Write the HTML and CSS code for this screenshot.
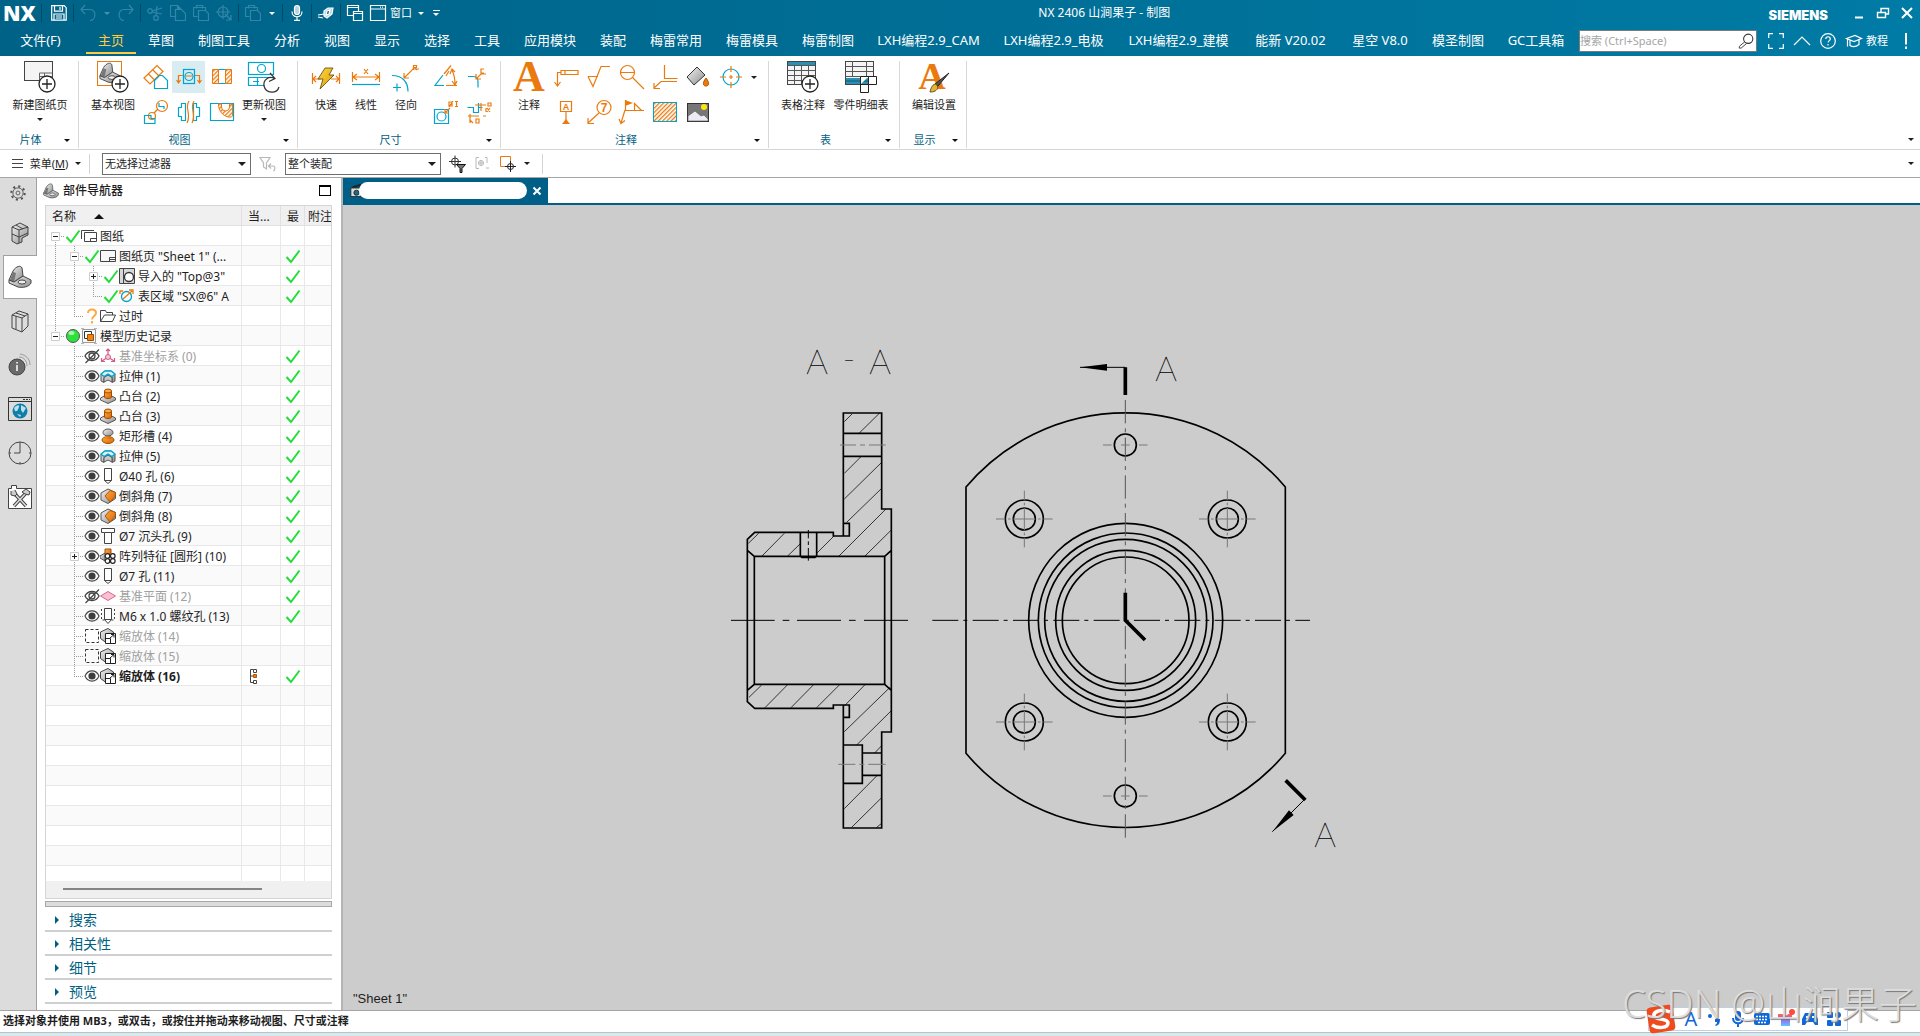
FILE: index.html
```html
<!DOCTYPE html>
<html lang="zh-CN">
<head>
<meta charset="utf-8">
<title>NX 2406 山涧果子 - 制图</title>
<link rel="stylesheet" href="styles.css">
</head>
<body>
<svg class="defs" aria-hidden="true">
  <defs>
    <linearGradient id="metal" x1="0" y1="0" x2="1" y2="1"><stop offset="0" stop-color="#f4f4f4"/><stop offset="1" stop-color="#8c8c8c"/></linearGradient>
    <linearGradient id="amber" x1="0" y1="0" x2="1" y2="1"><stop offset="0" stop-color="#ffab45"/><stop offset="1" stop-color="#d86400"/></linearGradient>
    <linearGradient id="bolt" x1="0" y1="0" x2="1" y2="1"><stop offset="0" stop-color="#ffd84a"/><stop offset="1" stop-color="#d99b00"/></linearGradient>
    <linearGradient id="shirt" x1="0" y1="0" x2="0" y2="1"><stop offset="0" stop-color="#ff6a3c"/><stop offset=".4" stop-color="#a35cf0"/><stop offset="1" stop-color="#5ac8ff"/></linearGradient>
    <pattern id="stripes" width="3" height="3" patternUnits="userSpaceOnUse" patternTransform="rotate(45)"><rect width="3" height="3" fill="#fff"/><rect width="1.300" height="3" fill="#eb7a0e"/></pattern>
    <symbol id="check" viewBox="0 0 16 16"><path d="M1.500 9l4.500 5L14.500 2.500" fill="none" stroke="#24dd3a" stroke-width="2"/></symbol>
    <symbol id="question" viewBox="0 0 16 16"><path d="M4 5c0-5 8-4.500 8 0 0 3-4 3-4 6.500M8 13v2.500" fill="none" stroke="#ffa940" stroke-width="2"/></symbol>
    <symbol id="ball" viewBox="0 0 16 16"><circle cx="8" cy="8" r="6.500" fill="#2ee03c" stroke="#555"/><ellipse cx="6.500" cy="5" rx="3" ry="2" fill="#a6f7ab"/></symbol>
    <symbol id="eye" viewBox="0 0 16 16"><path d="M1 8C4 1.200 12 1.200 15 8 12 14.800 4 14.800 1 8z" fill="#fff" stroke="#444" stroke-width="1.100"/><circle cx="8" cy="8" r="3.600" fill="#3d3d3d"/></symbol>
    <symbol id="eye-off" viewBox="0 0 16 16"><path d="M1 8C4 2 12 2 15 8 12 14 4 14 1 8z" fill="none" stroke="#444" stroke-width="1.300"/><circle cx="8" cy="8" r="3" fill="none" stroke="#444" stroke-width="1.300"/><path d="M1.500 15L15 1.500" stroke="#444" stroke-width="1.300"/></symbol>
    <symbol id="dashed" viewBox="0 0 16 16"><rect x="1.500" y="1.500" width="13" height="13" fill="none" stroke="#333" stroke-dasharray="3 2"/></symbol>
    <symbol id="sheets" viewBox="0 0 16 16"><path d="M.5 11V2.500H13M3.500 13.500v-9h12v9z" fill="#fff" stroke="#444"/><path d="M9.500 13.500v-3h6" fill="none" stroke="#444"/></symbol>
    <symbol id="sheet" viewBox="0 0 16 16"><path d="M.5 2.500h15v11H.5z" fill="#f7f7f7" stroke="#444"/><path d="M9.500 13.500v-4h6M9.500 11.500h6" fill="none" stroke="#444"/></symbol>
    <symbol id="imported" viewBox="0 0 16 16"><path d="M.5.500h15v15H.5z" fill="#d8d8d8" stroke="#444"/><path d="M4.500 1v14" stroke="#444"/><circle cx="10" cy="9" r="4.500" fill="#fff" stroke="#333" stroke-width="1.300"/></symbol>
    <symbol id="region" viewBox="0 0 16 16"><circle cx="7.500" cy="8.500" r="5" fill="none" stroke="#00a5cf" stroke-width="1.300"/><path d="M1 6V3h3M4 11L13 3M10 2l4 0v4" fill="none" stroke="#eb7a0e" stroke-width="1.300"/></symbol>
    <symbol id="folder" viewBox="0 0 16 16"><path d="M.5 13.500v-11h5l1 2h6v2.500M.5 13.500L4.500 7h11l-3 6.500z" fill="#fff" stroke="#444"/></symbol>
    <symbol id="history" viewBox="0 0 16 16"><path d="M1.500 1.500h13v13h-13z" fill="none" stroke="#999"/><path d="M0 0h3M13 0h3M0 16h3M13 16h3" stroke="#777"/><path d="M3.500 3.500h7v7h-7z" fill="#fff" stroke="#333"/><path d="M6.500 6.500h6v6h-6z" fill="#f08216" stroke="#a14b00"/></symbol>
    <symbol id="csys" viewBox="0 0 16 16"><path d="M8 9V1M8 9L2 13M8 9l6 4M6 3l2-2 2 2M1.500 10v3.500H5M14.500 10v3.500H11" fill="none" stroke="#d35b85" stroke-width="1.200"/><circle cx="8" cy="9" r="2.500" fill="#f7c6d6" stroke="#d35b85"/></symbol>
    <symbol id="extrude" viewBox="0 0 16 16"><path d="M1 6l4-3h6l4 3v7l-3 1.500V9L8 7 4 9.500v5L1 13z" fill="url(#metal)" stroke="#555"/><path d="M4 9.500l4-2.500 4 2.500v4.500l-4-2-4 2z" fill="#c9c9c9" stroke="#555"/><path d="M1 6l4-3h6l4 3-3 2.500L8 6 4 8.500z" fill="#d6f3fa" stroke="#00a5cf" stroke-width="1.300"/></symbol>
    <symbol id="boss" viewBox="0 0 16 16"><path d="M.5 10L8 6l7.500 4v2L8 15.500.5 12z" fill="url(#metal)" stroke="#555"/><path d="M4.500 3v6c0 2 7 2 7 0V3z" fill="url(#amber)" stroke="#a14b00"/><ellipse cx="8" cy="3" rx="3.500" ry="2" fill="#ffab45" stroke="#a14b00"/></symbol>
    <symbol id="groove" viewBox="0 0 16 16"><ellipse cx="8" cy="12" rx="6" ry="3.500" fill="url(#amber)" stroke="#a14b00"/><path d="M5 6h6v5H5z" fill="url(#amber)"/><ellipse cx="8" cy="4.500" rx="5" ry="3.500" fill="url(#metal)" stroke="#555"/></symbol>
    <symbol id="hole" viewBox="0 0 16 16"><path d="M4.500.5h7v12L8 15.500 4.500 12.500zM4.500 12.500h7" fill="#fff" stroke="#444"/></symbol>
    <symbol id="cbore" viewBox="0 0 16 16"><path d="M1.500.500h13v4h-3v11h-7v-11h-3zM4.500 4.500h7" fill="#fff" stroke="#444"/></symbol>
    <symbol id="thread" viewBox="0 0 16 16"><path d="M4.500.5h7v11L8 15.500 4.500 11.500zM4.500 11.500h7" fill="#fff" stroke="#444"/><path d="M1.500 1v11h3M14.500 1v11h-3" fill="none" stroke="#444" stroke-dasharray="2 2"/></symbol>
    <symbol id="chamfer" viewBox="0 0 16 16"><path d="M1 5l7-4 7.500 3.500v6L8 15.500 1 12z" fill="url(#metal)" stroke="#555"/><path d="M5 8l5-5.500 5.500 2-.5 4L10 14z" fill="url(#amber)" stroke="#b45400"/></symbol>
    <symbol id="pattern" viewBox="0 0 16 16"><path d="M5 1h6v7H5z" fill="url(#amber)" stroke="#a14b00"/><path d="M0 8l5-3v8l-5-3z" fill="url(#metal)" stroke="#555"/><g fill="#fff" stroke="#222" stroke-width="1.200"><circle cx="7.500" cy="8" r="2.300"/><circle cx="12.800" cy="8" r="2.300"/><circle cx="7.500" cy="13" r="2.300"/><circle cx="12.800" cy="13" r="2.300"/></g></symbol>
    <symbol id="plane" viewBox="0 0 16 16"><path d="M.5 8L8 3.500 15.500 8 8 12.500z" fill="#f7c0d3" stroke="#d9668e"/></symbol>
    <symbol id="scale" viewBox="0 0 16 16"><path d="M.5 4L8 .5 13.500 4v6L6 14.500.5 10.500z" fill="url(#metal)" stroke="#444"/><path d="M5.500 5.500h10v10h-10z" fill="#fff" stroke="#222"/><path d="M5.500 10.500h5v5M10 10l4-3.500M11 6.500h3v3" fill="none" stroke="#222"/></symbol>
    <symbol id="current" viewBox="0 0 16 16"><path d="M5.500 1.500h-3v13h3M2.500 8h3" fill="none" stroke="#444"/><path d="M5.500 1.500h3v3h-3zM5.500 12.500h3v3h-3z" fill="#fff" stroke="#444"/><path d="M5.500 6.500h3v3h-3z" fill="#eb7a0e" stroke="#b45400"/></symbol>
    <symbol id="minus" viewBox="0 0 9 9"><path d="M.5.5h8v8h-8z" fill="#fff" stroke="#ccc"/><path d="M2 4.500h5" stroke="#222"/></symbol>
    <symbol id="plus" viewBox="0 0 9 9"><path d="M.5.5h8v8h-8z" fill="#fff" stroke="#ccc"/><path d="M2 4.500h5M4.500 2v5" stroke="#222"/></symbol>
    <symbol id="bracket" viewBox="0 0 24 24"><path d="M1 15L5 6C8 1 13 0 14 3l1 8-9 6z" fill="url(#metal)" stroke="#444"/><path d="M5 7l-3 8 4 2 2-9" fill="#777"/><path d="M1 15l5 2 9-6 8 4v3c-2 4-8 5-13 4l-9-4z" fill="url(#metal)" stroke="#444"/><ellipse cx="14" cy="17" rx="4" ry="2" fill="#eee" stroke="#444"/></symbol>
    <symbol id="add" viewBox="0 0 18 18"><circle cx="9" cy="9" r="8" fill="#fff" stroke="#222" stroke-width="1.300"/><path d="M9 4v10M4 9h10" stroke="#222" stroke-width="1.300"/></symbol>
    <symbol id="copy" viewBox="0 0 16 16"><path d="M10.500 11.500h-10V.5h7l3 3zM7.500.5v3h3" /><path d="M5.500 4.500h6l4 4v7h-10z" fill="#006489"/></symbol>
    <symbol id="paste" viewBox="0 0 16 16"><path d="M4.500 11.500h-4v-9h12v3M3.500 3.500v-3h6v3" /><path d="M5.500 5.500h7l3 3v7h-10z" fill="#006489"/></symbol>
  </defs>
</svg>

<header class="masthead">
  <div class="titlebar">
    <div class="quick">
      <span class="logo">NX</span><i class="rule"></i>
      <button class="qb" aria-label="保存"><svg viewBox="0 0 16 16"><path d="M.7.700h12.500l2 2v12.500H.7zM3.500.7v5.500h8V.7M9 2v3M3 15V9h10v6M5 11h6M5 13h6"/></svg></button><i class="rule"></i>
      <button class="qb dim" aria-label="撤消"><svg viewBox="0 0 16 16"><path d="M5 0L1 4.500 5 9M1 4.500h9c7 0 6 11 0 11"/></svg></button><span class="drop dim"><i class="caret"></i></span>
      <button class="qb dim" aria-label="重做"><svg viewBox="0 0 16 16"><path d="M11 0l4 4.500L11 9M15 4.500H6c-7 0-6 11 0 11"/></svg></button><i class="rule"></i>
      <button class="qb dim" aria-label="剪切"><svg viewBox="0 0 16 16"><circle cx="3" cy="6" r="2.300"/><circle cx="9" cy="13" r="2.300"/><path d="M5 7l10 2M9 10.500L10 1M5 6l10-3"/></svg></button>
      <button class="qb dim" aria-label="复制"><svg viewBox="0 0 16 16"><use href="#copy"/></svg></button>
      <button class="qb dim" aria-label="粘贴"><svg viewBox="0 0 16 16"><use href="#paste"/></svg></button>
      <button class="qb dim" aria-label="定位"><svg viewBox="0 0 16 16"><circle cx="7" cy="7" r="5"/><path d="M7 0v14M0 7h14M9 9l6 6M15 10v5h-5"/></svg></button><i class="rule"></i>
      <button class="qb dim" aria-label="选择性粘贴"><svg viewBox="0 0 16 16"><use href="#paste"/></svg></button><span class="drop"><i class="caret"></i></span><i class="rule"></i>
      <button class="qb" aria-label="语音"><svg viewBox="0 0 16 16"><rect x="5.500" y=".5" width="5" height="9" rx="2.500" fill="#b9d3dd"/><path d="M3 6.500c0 7 10 7 10 0M8 12v3M5 15.300h6"/></svg></button><i class="rule"></i>
      <button class="qb" aria-label="触控"><svg viewBox="0 0 16 16"><path d="M0 10l6-1 2-3M0 12l5 1" /><path d="M6 6l4-3 5 0-1 6-5 4-3-2z" fill="#b9d3dd"/><path d="M9 6l3-1-1 4-3 1z" fill="#006489"/></svg></button><i class="rule"></i>
      <button class="qb" aria-label="层叠"><svg viewBox="0 0 16 16"><path d="M6 10.500H.500V.5h11V6M.5 2.500h11M6.500 6.500h9v9h-9zM6.500 8.500h9"/></svg></button>
      <button class="qb" aria-label="新窗口"><svg viewBox="0 0 16 16"><path d="M.5.5h15v15H.5zM.5 4h15M10 2.200h1M12 2.200h1"/></svg></button>
      <button class="window-menu">窗口<i class="caret"></i></button>
      <button class="more" aria-label="更多"><i></i><i class="caret"></i></button>
    </div>
    <h1 class="caption">NX 2406 山涧果子 - 制图</h1>
    <div class="win">
      <span class="brand">SIEMENS</span>
      <button class="wb" aria-label="最小化"><svg viewBox="0 0 12 12"><path d="M2 10.500h8"/></svg></button>
      <button class="wb" aria-label="还原"><svg viewBox="0 0 12 12"><path d="M4 5V1.500h7.500V7H9M.5 5.500h8v5h-8z" stroke-width="1.400"/></svg></button>
      <button class="wb" aria-label="关闭"><svg viewBox="0 0 12 12"><path d="M1 1l10 10M11 1L1 11"/></svg></button>
    </div>
  </div>
  <nav class="tabs">
    <a class="tab tab--file" href="#">文件(F)</a>
    <a class="tab tab--on" href="#">主页</a>
    <a class="tab" href="#">草图</a>
    <a class="tab tab--m" href="#">制图工具</a>
    <a class="tab" href="#">分析</a>
    <a class="tab" href="#">视图</a>
    <a class="tab" href="#">显示</a>
    <a class="tab" href="#">选择</a>
    <a class="tab" href="#">工具</a>
    <a class="tab tab--m" href="#">应用模块</a>
    <a class="tab" href="#">装配</a>
    <a class="tab tab--m" href="#">梅雷常用</a>
    <a class="tab tab--m" href="#">梅雷模具</a>
    <a class="tab tab--m" href="#">梅雷制图</a>
    <a class="tab tab--xl" href="#">LXH编程2.9_CAM</a>
    <a class="tab tab--xl" href="#">LXH编程2.9_电极</a>
    <a class="tab tab--xl" href="#">LXH编程2.9_建模</a>
    <a class="tab tab--l" href="#">能新 V20.02</a>
    <a class="tab tab--s" href="#">星空 V8.0</a>
    <a class="tab tab--m" href="#">模圣制图</a>
    <a class="tab tab--s" href="#">GC工具箱</a>
    <div class="tools">
      <label class="search"><input type="text" placeholder="搜索 (Ctrl+Space)" aria-label="搜索"><svg viewBox="0 0 18 18"><circle cx="11.500" cy="6.500" r="5.200" fill="#fff" stroke="#333" stroke-width="1.200"/><path d="M7.500 10l2 2-6 5H1.500v-2z" fill="#fff" stroke="#333"/></svg></label>
      <button class="qb" aria-label="全屏"><svg viewBox="0 0 16 16"><path d="M.7 5V.7H5M11 .7h4.300V5M15.300 11v4.300H11M5 15.300H.7V11"/></svg></button>
      <button class="qb" aria-label="折叠功能区"><svg viewBox="0 0 16 16"><path d="M0 12l8-8 8 8"/></svg></button>
      <button class="qb" aria-label="帮助"><svg viewBox="0 0 16 16"><circle cx="8" cy="8" r="7.300"/><path d="M5.800 6c0-3 4.500-3 4.500 0 0 1.500-2.200 1.800-2.200 3.500M8 11v1.500"/></svg></button>
      <button class="learn"><svg viewBox="0 0 16 16"><path d="M.5 5.500L9 2.500l6.500 3L8 8.500zM4 7.500v5c3 2 6 1.500 9-1V7M1.500 6.500v7"/></svg>教程</button>
      <button class="qb" aria-label="通知"><svg viewBox="0 0 16 16"><path d="M8 0v11.500M8 13.500V16" stroke-width="2"/></svg></button>
    </div>
  </nav>
</header>

<section class="ribbon" aria-label="功能区">
  <div class="group g-sheet">
    <div class="cmds">
      <button class="big wide"><svg viewBox="0 0 32 32"><rect x=".5" y=".5" width="28" height="19" fill="#f4f4f4" stroke="#444"/><path d="M15.500 19v-7h13M15.500 15.500h13M20.500 12v7" fill="none" stroke="#666"/><use href="#add" x="14" y="14" width="18" height="18"/></svg>新建图纸页<i class="caret"></i></button>
    </div>
    <div class="foot"><span>片体</span><i class="caret"></i></div>
  </div>
  <div class="group g-view">
    <div class="cmds">
      <button class="big"><svg viewBox="0 0 32 32"><rect x=".5" y=".5" width="24" height="24" fill="#fff" stroke="#eb7a0e"/><use href="#bracket" x="2" y="1" width="22" height="22"/><use href="#add" x="14" y="14" width="18" height="18"/></svg>基本视图</button>
      <div class="smalls c3">
        <button class="sm" aria-label="投影视图"><svg viewBox="0 0 24 24"><path d="M0 13L13 .5l6 6L6 19zM4.500 9l6 6M9 5l6 6" class="o"/><path d="M10.500 23.500v-8l5-5h3l5 5v8z" class="c f"/></svg></button>
        <button class="sm lit" aria-label="剖视图"><svg viewBox="0 0 24 24"><rect x="6.500" y="4.500" width="11" height="14" class="c"/><circle cx="12" cy="11.500" r="4" class="c"/><path d="M6 10.500H1.500V18M18 10.500h4.500V18M-.5 15l2 3 2-3M20.500 15l2 3 2-3M9 11h6" class="o"/></svg></button>
        <button class="sm" aria-label="断面图"><svg viewBox="0 0 24 24"><path d="M2.500 4.500h6v14h-6zM15.500 4.500h6v14h-6z" fill="url(#stripes)" stroke="#eb7a0e"/><path d="M8.500 4.500h7M8.500 18.500h7" class="c"/></svg></button>
        <button class="sm" aria-label="局部放大图"><svg viewBox="0 0 24 24"><circle cx="18" cy="6" r="5.500" class="o"/><circle cx="8" cy="16" r="3.500" class="o"/><path d="M10 13l4-4" class="o"/><path d="M15 3v3.500h5V9M.5 15.500H7v3h4v5H.5z" class="c"/></svg></button>
        <button class="sm" aria-label="断开视图"><svg viewBox="0 0 24 24"><path d="M1.500 7.500h3v-4h4v17h-4v-4h-3zM22.500 7.500h-3v-4h-3v17h3v-4h3z" class="c"/><path d="M12 1c-5 8 3 12-2 22M17 1c-5 8 3 12-2 22" class="o"/></svg></button>
        <button class="sm" aria-label="局部剖"><svg viewBox="0 0 24 24"><path d="M.5 3.500h23v17H.5z" class="c"/><path d="M8.500 4c0 6 3 10 7 12s6 1 7 0V4h-3v3a4 4 0 0 1-8 0V4z" fill="url(#stripes)" stroke="#eb7a0e"/></svg></button>
      </div>
      <button class="big"><svg viewBox="0 0 32 32"><rect x=".5" y="1.500" width="25" height="12" class="c"/><circle cx="13.500" cy="7.500" r="4" class="c"/><path d="M25.500 16.500H.5v8h16M5 20.500h6M9.500 17v7" class="c"/><path d="M27 18c-6-4-12 1-11 7 2 8 13 8 15 1M22 12l5 5.500-6 3" fill="none" stroke="#333" stroke-width="1.200"/></svg>更新视图<i class="caret"></i></button>
    </div>
    <div class="foot"><span>视图</span><i class="caret"></i></div>
  </div>
  <div class="group g-dim">
    <div class="cmds">
      <button class="big"><svg viewBox="0 0 32 32"><path d="M2.500 12v11M29.500 12v11M3 18h8M21 18h8M6 15l-3 3 3 3M26 15l3 3-3 3" class="o"/><path d="M15 7h8l-4 7h5L10 28l3-10H8z" fill="url(#bolt)" stroke="#5a4500" stroke-width=".8"/></svg>快速</button>
      <button class="big"><svg viewBox="0 0 32 32"><path d="M2.500 11v10M29.500 11v10M3 16h26M7 13l-4 3 4 3M25 13l4 3-4 3M14 8l4 5M18 8l-4 5" class="o"/><path d="M2 23.500h28" class="c"/></svg>线性</button>
      <button class="big"><svg viewBox="0 0 32 32"><path d="M2 14.500c10 0 16 6 16 16M3 26.500h8M7 22.500v8" class="c"/><path d="M14 17l9-9h6M14 12v5h5M23.500 9V4.500h3v2h-3M25 7l2 2" class="o"/></svg>径向</button>
      <div class="smalls c2">
        <button class="sm" aria-label="角度"><svg viewBox="0 0 24 24"><path d="M9 10L1 20.500h9" class="c"/><path d="M10 9L17 .5M12 20.500h11M18 5c2 4 3 8 3 15M12 11l3-5M16 9l2-5 3 3M18 16l3 4 2-4" class="o"/></svg></button>
        <button class="sm" aria-label="倒斜角"><svg viewBox="0 0 24 24"><path d="M1 11.500h5c4 0 5 3 5 5v6" class="c"/><path d="M9 14l5-5h5M9 9v5h5M17 4h-3v4h3" class="o"/></svg></button>
        <button class="sm" aria-label="孔标注"><svg viewBox="0 0 24 24"><path d="M.5 9.500h14v14H.5z" class="c"/><circle cx="7.500" cy="16.500" r="4.500" class="c"/><path d="M11 13l5-5M11 9v4h4M15 7l4-6M15 2h3v4h-3zM21 1.500h3M21 6.500h3M22.500 1.500v5" class="o"/></svg></button>
        <button class="sm" aria-label="坐标"><svg viewBox="0 0 24 24"><path d="M.5 7.500h6v5h5v-5h4M11.500 3v5" class="c"/><path d="M14 3v8M8 5h11M1 16h11M3 14v9M9 19h3v4H9zM21 3h3v3h-3zM3 20l3 3M16 16h3M19 8v4M20 8l3 4M23 8l-3 4" class="o"/></svg></button>
      </div>
    </div>
    <div class="foot"><span>尺寸</span><i class="caret"></i></div>
  </div>
  <div class="group g-note">
    <div class="cmds">
      <button class="big"><svg viewBox="0 0 32 32"><text x="16" y="30" class="serif-a">A</text></svg>注释</button>
      <div class="smalls c6">
        <button class="sm" aria-label="特征控制框"><svg viewBox="0 0 24 24"><path d="M7 5.500h17v4H7zM11 5.500v4M7 7.500H3.500V21M.5 17l3 4 3-4" class="o"/></svg></button>
        <button class="sm" aria-label="表面粗糙度"><svg viewBox="0 0 24 24"><path d="M1 11.500h10M1 11.500l5 10 8-20h9" class="o"/></svg></button>
        <button class="sm" aria-label="剖切线"><svg viewBox="0 0 24 24"><circle cx="7.500" cy="7.500" r="7" class="o"/><path d="M.5 7.500h14M12.500 12.500L24 24" class="o"/></svg></button>
        <button class="sm" aria-label="相交符号"><svg viewBox="0 0 24 24"><path d="M11.500 0v13.500h13M24 16.500H8L1 23M1 18v5.500h6" class="o"/></svg></button>
        <button class="sm" aria-label="填充"><svg viewBox="0 0 24 24"><path d="M1 12L11 2l8 8L8 20z" fill="url(#metal)" stroke="#333"/><path d="M20 13c4 5 3 8 0 8s-4-3 0-8z" fill="#eb7a0e" stroke="#b45400"/></svg></button>
        <button class="sm" aria-label="中心标记"><svg viewBox="0 0 24 24"><circle cx="12" cy="12" r="8" class="c"/><path d="M12 1v6M12 17v6M1 12h6M17 12h6M12 10v4M10 12h4" class="o"/></svg></button>
        <button class="sm" aria-label="基准特征"><svg viewBox="0 0 24 24"><path d="M6.500 1.500h11v10h-11zM12 12v9" class="o"/><path d="M8 24l4-5 4 5z" fill="#eb7a0e"/><text x="12" y="10" class="tiny">A</text></svg></button>
        <button class="sm" aria-label="符号标注"><svg viewBox="0 0 24 24"><circle cx="17" cy="7.500" r="7" class="o"/><path d="M12 13L1 23M1 18v5.500h6" class="o"/><text x="17" y="12" class="num">7</text></svg></button>
        <button class="sm" aria-label="焊接符号"><svg viewBox="0 0 24 24"><path d="M5.500 0v10.500H24M14.500 10.500v-7l7 7M5 10L1 23M-1 19l2 4.500 4-3" class="o"/><path d="M5 0l8 3-8 3z" fill="#eb7a0e"/></svg></button>
        <button class="sm" aria-label="剖面线"><svg viewBox="0 0 24 24"><rect x=".5" y="2.500" width="23" height="19" fill="url(#stripes)" stroke="#00a5cf"/></svg></button>
        <button class="sm" aria-label="图像"><svg viewBox="0 0 24 24"><rect x="1.500" y="3.500" width="21" height="18" fill="#777" stroke="#333"/><circle cx="18" cy="7" r="3" fill="#ffe600"/><path d="M2 21v-5l7-5 6 5 3-1 4 4v2z" fill="#eceaf4" stroke="#555" stroke-width=".6"/></svg></button>
      </div>
      <span class="drop tall"><i class="caret"></i></span>
    </div>
    <div class="foot"><span>注释</span><i class="caret"></i></div>
  </div>
  <div class="group g-table">
    <div class="cmds">
      <button class="big wide"><svg viewBox="0 0 32 32"><rect x=".5" y=".5" width="28" height="23" fill="#f4f4f4" stroke="#444"/><rect x="1" y="1" width="27" height="3" fill="#2a8fb0"/><path d="M.5 4.500h28M.5 9.500h28M.5 14.500h28M.5 19.500h28M7.500 4v20M14.500 4v20M21.500 4v20" stroke="#555"/><use href="#add" x="14" y="14" width="18" height="18"/></svg>表格注释</button>
      <button class="big wide"><svg viewBox="0 0 32 32"><rect x=".5" y=".5" width="28" height="23" fill="#f4f4f4" stroke="#444"/><path d="M.5 5.500h28M.5 10.500h28M.5 15.500h28M7.500 0v16M21.500 0v16" stroke="#555"/><path d="M1 17h27v6H1z" fill="#2a8fb0"/><path d="M1 20h27" stroke="#0c5d7a"/><path d="M15.500 15.500h16v8h-8v8h-8zM15.500 23.500h8v-8" fill="#fff" stroke="#222"/></svg>零件明细表</button>
    </div>
    <div class="foot"><span>表</span><i class="caret"></i></div>
  </div>
  <div class="group g-show">
    <div class="cmds">
      <button class="big"><svg viewBox="0 0 32 32"><text x="14" y="28" class="serif-b">A</text><path d="M31 12L20 25l-3-2z" fill="#555" stroke="#222"/><path d="M12 31c1-5 3-8 6-8l2 3c-1 4-4 5-8 5z" fill="#e0b53a" stroke="#6b5210"/></svg>编辑设置</button>
    </div>
    <div class="foot"><span>显示</span><i class="caret"></i></div>
  </div>
  <span class="edge"><i class="caret"></i></span>
</section>

<section class="filterbar" aria-label="选择条">
  <button class="menu"><svg viewBox="0 0 11 11"><path d="M0 1.500h11M0 5.500h11M0 9.500h11" stroke="#444"/></svg><span>菜单(<u>M</u>)</span><i class="caret"></i></button>
  <i class="vr"></i>
  <label class="combo combo--a"><select aria-label="类型过滤器"><option>无选择过滤器</option></select><i class="caret"></i></label>
  <button class="fb" aria-label="重置过滤器"><svg viewBox="0 0 18 18"><path d="M2 2.500h10L8.500 8v6l-3-2V8zM11 11h4c3 0 2 5 0 5M13 8.500L10.500 11l2.500 2.500" fill="none" stroke="#b8b8b8" stroke-width="1.200"/></svg></button>
  <label class="combo combo--b"><select aria-label="选择范围"><option>整个装配</option></select><i class="caret"></i></label>
  <button class="fb" aria-label="常规选择过滤器"><svg viewBox="0 0 18 18"><circle cx="6" cy="6.500" r="3.500" fill="none" stroke="#333"/><path d="M6 .5v12M0 6.500h12" stroke="#333"/><path d="M7.500 9.500h9L13 13.500v4h-2v-4z" fill="#777" stroke="#111"/></svg></button>
  <button class="fb" aria-label="突出显示"><svg viewBox="0 0 18 18"><path d="M5 2.500H2v11h3M11 2.500h2V8M12 13h3M7 5v6M4 8h6" fill="none" stroke="#b8b8b8"/><circle cx="7" cy="8" r="2.500" fill="none" stroke="#b8b8b8"/></svg></button>
  <button class="fb" aria-label="捕捉点"><svg viewBox="0 0 18 18"><path d="M1.500 1.500h10v10h-10z" fill="#fff" stroke="#eb7a0e"/><circle cx="11.500" cy="11.500" r="3" fill="none" stroke="#222"/><path d="M11.500 6v11M6 11.500h11" stroke="#222"/></svg></button>
  <span class="drop"><i class="caret"></i></span>
  <i class="vr"></i>
  <span class="edge"><i class="caret"></i></span>
</section>

<main class="work">
  <nav class="rail" aria-label="资源条">
    <button class="rb rb--gear" aria-label="设置"><svg viewBox="0 0 18 18"><circle cx="9" cy="9" r="5.800" fill="none" stroke="#555"/><circle cx="9" cy="9" r="7.500" fill="none" stroke="#555" stroke-width="2.400" stroke-dasharray="2.400 3.490"/><circle cx="9" cy="9" r="2.200" fill="none" stroke="#555"/></svg></button>
    <button class="rb" aria-label="装配导航器"><svg viewBox="0 0 24 24"><path d="M4 6l8-4 8 4v8l-6 3v4l-5 2-5-3z" fill="url(#metal)" stroke="#444"/><path d="M4 6l7 3 9-3M11 9v13M4 13l7 3 9-4M8 4l7 4" fill="none" stroke="#444"/></svg></button>
    <button class="rb rb--on" aria-label="部件导航器"><svg viewBox="0 0 24 24"><use href="#bracket"/></svg></button>
    <button class="rb" aria-label="重用库"><svg viewBox="0 0 24 24"><path d="M4 6l7-4 9 3v12l-6 6-10-4z" fill="#dcdcdc" stroke="#444"/><path d="M4 6l10 3 6-4M14 9v14M8 4l9 3M8 7v13" fill="none" stroke="#444"/></svg></button>
    <button class="rb" aria-label="信息"><svg viewBox="0 0 24 24"><circle cx="9" cy="14" r="8" fill="#6a6a6a" stroke="#444"/><path d="M9 12v6M9 9v1.500" stroke="#fff" stroke-width="1.500"/><path d="M11 4c5 0 8 4 8 9M12 1c6 1 10 5 10 11" fill="none" stroke="#999"/></svg></button>
    <button class="rb" aria-label="浏览器"><svg viewBox="0 0 24 24"><path d="M.5.500h23v23H.5z" fill="#dcdcdc" stroke="#333"/><path d="M.5 4.500h23M15 2.500h2M18 2.500h2M21 2.500h1" stroke="#333"/><circle cx="12" cy="14" r="7.500" fill="#0f7fa8"/><path d="M6 11c3-4 6-3 5-1s-1 5-4 4zM13 8l5 3-3 5-2-3zM9 17l4 1-1 2z" fill="#b9e2ef"/></svg></button>
    <button class="rb" aria-label="历史记录"><svg viewBox="0 0 24 24"><circle cx="12" cy="12" r="11" fill="none" stroke="#444"/><path d="M12 1v11H6M12 21v2M21 12h2M1 12h2" fill="none" stroke="#444"/></svg></button>
    <button class="rb" aria-label="角色"><svg viewBox="0 0 24 24"><path d="M.5 23.500v-20h3v-3h5v3h15v20z" fill="#fff" stroke="#444"/><path d="M7 9l11 12M18 8L6 21" stroke="#444" stroke-width="3.500"/><path d="M7 9l11 12M18 8L6 21" stroke="#ddd" stroke-width="1.500"/><path d="M3 6v4l4 1 2-2-2-4M14 7l4-3 4 3-1 3-4-1z" fill="#ccc" stroke="#444"/></svg></button>
  </nav>

  <aside class="panel">
    <div class="panel-head"><svg viewBox="0 0 24 24"><use href="#bracket"/></svg><h2>部件导航器</h2><button aria-label="最大化"></button></div>
    <div class="tree">
      <div class="rows">
        <table>
          <colgroup><col class="k1"><col class="k2"><col class="k3"><col class="k4"></colgroup>
          <thead><tr><th>名称<i class="up"></i></th><th>当...</th><th>最</th><th>附注</th></tr></thead>
          <tbody>
            <tr><td><div class="n"><button class="t first" aria-label="折叠"><svg><use href="#minus"/></svg></button><svg><use href="#check"/></svg><svg><use href="#sheets"/></svg><span>图纸</span></div></td><td></td><td></td><td></td></tr>
            <tr><td><div class="n"><i class="v"></i><button class="t" aria-label="折叠"><svg><use href="#minus"/></svg></button><svg><use href="#check"/></svg><svg><use href="#sheet"/></svg><span>图纸页 "Sheet 1" (...</span></div></td><td></td><td><svg><use href="#check"/></svg></td><td></td></tr>
            <tr><td><div class="n"><i class="v"></i><i class="v"></i><button class="t" aria-label="展开"><svg><use href="#plus"/></svg></button><svg><use href="#check"/></svg><svg><use href="#imported"/></svg><span>导入的 "Top@3"</span></div></td><td></td><td><svg><use href="#check"/></svg></td><td></td></tr>
            <tr><td><div class="n"><i class="v"></i><i class="v"></i><i class="e"></i><svg><use href="#check"/></svg><svg><use href="#region"/></svg><span>表区域 "SX@6" A</span></div></td><td></td><td><svg><use href="#check"/></svg></td><td></td></tr>
            <tr><td><div class="n"><i class="v"></i><i class="e"></i><svg><use href="#question"/></svg><svg><use href="#folder"/></svg><span>过时</span></div></td><td></td><td></td><td></td></tr>
            <tr><td><div class="n"><button class="t last" aria-label="折叠"><svg><use href="#minus"/></svg></button><svg><use href="#ball"/></svg><svg><use href="#history"/></svg><span>模型历史记录</span></div></td><td></td><td></td><td></td></tr>
            <tr class="off"><td><div class="n"><i></i><i class="v h"></i><svg><use href="#eye-off"/></svg><svg><use href="#csys"/></svg><span>基准坐标系 (0)</span></div></td><td></td><td><svg><use href="#check"/></svg></td><td></td></tr>
            <tr><td><div class="n"><i></i><i class="v h"></i><svg><use href="#eye"/></svg><svg><use href="#extrude"/></svg><span>拉伸 (1)</span></div></td><td></td><td><svg><use href="#check"/></svg></td><td></td></tr>
            <tr><td><div class="n"><i></i><i class="v h"></i><svg><use href="#eye"/></svg><svg><use href="#boss"/></svg><span>凸台 (2)</span></div></td><td></td><td><svg><use href="#check"/></svg></td><td></td></tr>
            <tr><td><div class="n"><i></i><i class="v h"></i><svg><use href="#eye"/></svg><svg><use href="#boss"/></svg><span>凸台 (3)</span></div></td><td></td><td><svg><use href="#check"/></svg></td><td></td></tr>
            <tr><td><div class="n"><i></i><i class="v h"></i><svg><use href="#eye"/></svg><svg><use href="#groove"/></svg><span>矩形槽 (4)</span></div></td><td></td><td><svg><use href="#check"/></svg></td><td></td></tr>
            <tr><td><div class="n"><i></i><i class="v h"></i><svg><use href="#eye"/></svg><svg><use href="#extrude"/></svg><span>拉伸 (5)</span></div></td><td></td><td><svg><use href="#check"/></svg></td><td></td></tr>
            <tr><td><div class="n"><i></i><i class="v h"></i><svg><use href="#eye"/></svg><svg><use href="#hole"/></svg><span>Ø40 孔 (6)</span></div></td><td></td><td><svg><use href="#check"/></svg></td><td></td></tr>
            <tr><td><div class="n"><i></i><i class="v h"></i><svg><use href="#eye"/></svg><svg><use href="#chamfer"/></svg><span>倒斜角 (7)</span></div></td><td></td><td><svg><use href="#check"/></svg></td><td></td></tr>
            <tr><td><div class="n"><i></i><i class="v h"></i><svg><use href="#eye"/></svg><svg><use href="#chamfer"/></svg><span>倒斜角 (8)</span></div></td><td></td><td><svg><use href="#check"/></svg></td><td></td></tr>
            <tr><td><div class="n"><i></i><i class="v h"></i><svg><use href="#eye"/></svg><svg><use href="#cbore"/></svg><span>Ø7 沉头孔 (9)</span></div></td><td></td><td><svg><use href="#check"/></svg></td><td></td></tr>
            <tr><td><div class="n"><i></i><button class="t" aria-label="展开"><svg><use href="#plus"/></svg></button><svg><use href="#eye"/></svg><svg><use href="#pattern"/></svg><span>阵列特征 [圆形] (10)</span></div></td><td></td><td><svg><use href="#check"/></svg></td><td></td></tr>
            <tr><td><div class="n"><i></i><i class="v h"></i><svg><use href="#eye"/></svg><svg><use href="#hole"/></svg><span>Ø7 孔 (11)</span></div></td><td></td><td><svg><use href="#check"/></svg></td><td></td></tr>
            <tr class="off"><td><div class="n"><i></i><i class="v h"></i><svg><use href="#eye-off"/></svg><svg><use href="#plane"/></svg><span>基准平面 (12)</span></div></td><td></td><td><svg><use href="#check"/></svg></td><td></td></tr>
            <tr><td><div class="n"><i></i><i class="v h"></i><svg><use href="#eye"/></svg><svg><use href="#thread"/></svg><span>M6 x 1.0 螺纹孔 (13)</span></div></td><td></td><td><svg><use href="#check"/></svg></td><td></td></tr>
            <tr class="off"><td><div class="n"><i></i><i class="v h"></i><svg><use href="#dashed"/></svg><svg><use href="#scale"/></svg><span>缩放体 (14)</span></div></td><td></td><td></td><td></td></tr>
            <tr class="off"><td><div class="n"><i></i><i class="v h"></i><svg><use href="#dashed"/></svg><svg><use href="#scale"/></svg><span>缩放体 (15)</span></div></td><td></td><td></td><td></td></tr>
            <tr class="now"><td><div class="n"><i></i><i class="e"></i><svg><use href="#eye"/></svg><svg><use href="#scale"/></svg><span>缩放体 (16)</span></div></td><td class="cur"><svg><use href="#current"/></svg></td><td><svg><use href="#check"/></svg></td><td></td></tr>
            <tr><td></td><td></td><td></td><td></td></tr>
            <tr><td></td><td></td><td></td><td></td></tr>
            <tr><td></td><td></td><td></td><td></td></tr>
            <tr><td></td><td></td><td></td><td></td></tr>
            <tr><td></td><td></td><td></td><td></td></tr>
            <tr><td></td><td></td><td></td><td></td></tr>
            <tr><td></td><td></td><td></td><td></td></tr>
            <tr><td></td><td></td><td></td><td></td></tr>
            <tr><td></td><td></td><td></td><td></td></tr>
            <tr><td></td><td></td><td></td><td></td></tr>
          </tbody>
        </table>
      </div>
      <div class="scroll"><i></i></div>
    </div>
    <div class="splitter"></div>
    <div class="folds">
      <button>搜索</button>
      <button>相关性</button>
      <button>细节</button>
      <button>预览</button>
    </div>
  </aside>

  <section class="stage">
    <div class="docs">
      <div class="doc">
        <svg class="doc-icon" viewBox="0 0 14 16"><path d="M1 4.500h12v10H1z" fill="#ddd" stroke="#222"/><path d="M3 3.500L12 1v3" fill="none" stroke="#222" stroke-width="2"/><circle cx="7.500" cy="10" r="3" fill="#1b6c8c" stroke="#222"/></svg>
        <span class="blank"></span>
        <button aria-label="关闭"><svg viewBox="0 0 8 8"><path d="M.5.500l7 7M7.500.500l-7 7" stroke="#fff" stroke-width="2"/></svg></button>
      </div>
    </div>
    <div class="canvas">
      <svg class="drawing" viewBox="343 205 1577 805" role="img" aria-label="零件图">
        <g transform="translate(730 330) scale(.33333)" fill="none" stroke="#000">
          <g stroke-width="3" stroke="#333">
            <path d="M343 275l23-23M387 310l62-61M343 430l50-50M343 507l112-110M350 577l105-102M326 679l142-142M404 679l80-79M260 670l52-52M172 679l39-38M95 679l68-69M55 640l31-30M57 1102l38-37M105 1133l67-68M183 1133l67-68M260 1133l68-68M343 1128l61-63M343 1205l137-133M380 1245l104-103M434 1269l21-22M343 1436l97-98M365 1492l90-89M440 1492l15-12"/>
          </g>
          <path stroke-width="5" d="M340 618V249H455V537H484V1206H455V1494H340V1125M340 310H455M340 379H455M340 580H358V618H310V607H74L52 628V1115L74 1135H310V1125H358V1162H340M52 661L73 679H464L484 661M52 1081L73 1063H464L484 1081M73 679V1063M464 679V1063M211 607V679L216 682H255L260 679V607M340 1245H397V1360H340M397 1269H455M397 1336H455"/>
          <path stroke-width="3" d="M3 871H134M158 871H178M201 871H333M357 871H377M402 871H534M235 600V625M235 634V645M235 654V692"/>
          <path stroke-width="3" stroke="#777" d="M330 345H378M390 345H405M417 345H467M325 1303H376M388 1303H403M415 1303H467"/>
        </g>
        <g transform="translate(920 340) scale(.33333)" fill="none" stroke="#000" stroke-width="5">
          <path d="M138 441A627 627 0 0 1 1096 441V1240A627 627 0 0 1 138 1240Z"/>
          <circle cx="617" cy="841" r="291"/><circle cx="617" cy="841" r="262"/><circle cx="617" cy="841" r="243"/><circle cx="617" cy="841" r="210"/><circle cx="617" cy="841" r="190"/>
          <circle cx="616" cy="315" r="33"/><circle cx="616" cy="1368" r="33"/>
          <circle cx="313" cy="537" r="57"/><circle cx="313" cy="537" r="33"/>
          <circle cx="922" cy="537" r="57"/><circle cx="922" cy="537" r="33"/>
          <circle cx="313" cy="1146" r="57"/><circle cx="313" cy="1146" r="33"/>
          <circle cx="922" cy="1146" r="57"/><circle cx="922" cy="1146" r="33"/>
          <path stroke="#555" stroke-width="3" stroke-dasharray="70 15 12 16" d="M616 180V1503"/>
          <path stroke-width="3" stroke-dasharray="78 15 12 16" d="M37 841H1170"/>
          <g stroke="#777" stroke-width="3" stroke-dasharray="28 8 8 8 66 8 8 8 28">
            <path d="M228 537H398M313 452V622M837 537H1007M922 452V622M228 1146H398M313 1061V1231M837 1146H1007M922 1061V1231"/>
          </g>
          <path stroke="#777" stroke-width="3" stroke-dasharray="26 28" d="M549 315H686M549 1368H686"/>
          <path stroke-width="3" d="M480 82H616M1154 1378L1057 1475"/>
          <path fill="#000" stroke="none" d="M480 82L561 72V92ZM1057 1475L1107 1411L1121 1425Z"/>
          <path stroke-width="11" d="M616 82V165M616 758V841L675 900M1097 1321L1156 1380"/>
        </g>
        <g class="marks">
          <text x="817" y="374">A</text><text x="849" y="371">-</text><text x="880" y="374">A</text>
          <text x="1166" y="381">A</text><text x="1325" y="847">A</text>
        </g>
      </svg>
      <span class="sheet-name">"Sheet 1"</span>
    </div>
  </section>
</main>

<footer class="status">选择对象并使用 MB3，或双击，或按住并拖动来移动视图、尺寸或注释</footer>

<div class="ime">
  <svg class="ime-logo" viewBox="0 0 30 30"><rect x="2" y="2" width="26" height="26" rx="4" fill="#f04a1d" transform="rotate(-9 15 15)"/><path d="M24 8C15 4 7 8 8 12s14 2 14 7-10 6-16 2" fill="none" stroke="#fff" stroke-width="3.500"/></svg>
  <span class="ime-a">A</span>
  <svg viewBox="0 0 16 16"><circle cx="4" cy="5" r="2"/><path d="M9 8h5c0 4-1 6-4 7l-1-1c2-1 2-2 2-3H9z"/></svg>
  <svg viewBox="0 0 16 16"><rect x="5" y="0" width="6" height="10" rx="3"/><path d="M3 7c0 7 10 7 10 0M8 12v4" fill="none" stroke="#1068d8" stroke-width="2"/></svg>
  <svg viewBox="0 0 16 16"><rect x="0" y="2" width="16" height="12" rx="2"/><path d="M2 5.500h12M2 8.500h12M4 11.500h8" stroke="#fff" stroke-width="1.500" stroke-dasharray="2 1"/></svg>
  <svg viewBox="0 0 16 16"><path d="M0 3h5c1 2 4 2 5 0h4v4h-2v8H3V7H0z" fill="url(#shirt)"/><circle cx="14" cy="1" r="3" fill="#ff4a3c"/></svg>
  <svg viewBox="0 0 16 16"><path d="M3 2h10l3 6v6h-3l-2-3H5l-2 3H0V8z"/><path d="M4 6h2M10 6h2" stroke="#fff" stroke-width="2"/></svg>
  <svg viewBox="0 0 16 16"><rect x="1" y="1" width="6" height="6" rx="1"/><rect x="9" y="1" width="6" height="6" rx="3"/><rect x="1" y="9" width="6" height="6" rx="1"/><rect x="9" y="9" width="6" height="6" rx="1"/></svg>
</div>
<div class="watermark">CSDN @山涧果子</div>
</body>
</html>
```
FILE: styles.css
```css
* { box-sizing: border-box; }
html, body { height: 100%; }
body {
  margin: 0;
  display: flex;
  flex-direction: column;
  overflow: hidden;
  background: #fff;
  color: #1e1e1e;
  font: 12px/16px "Noto Sans", "Noto Sans CJK SC", sans-serif;
}
button {
  display: flex;
  align-items: center;
  justify-content: center;
  padding: 0;
  border: 0;
  background: none;
  color: inherit;
  font: inherit;
}
svg { flex: none; overflow: visible; }
.defs { position: absolute; width: 0; height: 0; }
.caret {
  flex: none;
  width: 0;
  height: 0;
  border: 3px solid transparent;
  border-top-color: currentColor;
  border-bottom: 0;
}
.drop { display: flex; align-items: center; justify-content: center; width: 15px; }
.o { fill: none; stroke: #eb7a0e; stroke-width: 1.2; }
.c { fill: none; stroke: #00a5cf; stroke-width: 1.2; }
.f { fill: #fff; }

/* Title bar and tabs */
.masthead {
  flex: none;
  background: linear-gradient(90deg, #006287, #007ba5);
  color: #fff;
}
.titlebar { display: flex; height: 26px; align-items: center; }
.quick { display: flex; align-items: center; height: 26px; }
.logo {
  width: 41px;
  padding-left: 3px;
  font: 800 21px/26px "Open Sans", sans-serif;
}
.rule { width: 1px; height: 18px; margin: 0 2px 0 3px; background: #004a68; }
.logo + .rule { margin: 0 5px 0 0; }
.qb { width: 23px; height: 22px; }
.qb svg, .learn svg { width: 16px; height: 16px; fill: none; stroke: #fff; stroke-width: 1.2; }
.dim { color: #4593b0; }
.dim svg { stroke: #3287a8; }
.window-menu { gap: 6px; padding-left: 1px; font-size: 11px; }
.more { flex-direction: column; gap: 2px; width: 24px; }
.more i:first-child { width: 7px; height: 1px; background: #fff; }
.caption { flex: 1; margin: 0; padding-right: 8px; text-align: center; font-size: 12px; font-weight: 400; }
.win { display: flex; align-items: center; gap: 11px; padding-right: 7px; }
.brand { margin: 3px 14px 0 0; font: 900 13px/16px "Inter", sans-serif; }
.wb { width: 12px; height: 22px; }
.wb + .wb { margin-left: 1px; }
.wb svg { width: 12px; height: 12px; fill: none; stroke: #fff; stroke-width: 2; }
.tabs { display: flex; height: 30px; }
.tab {
  flex: none;
  width: 50px;
  height: 28px;
  border-bottom: 2px solid transparent;
  color: #fff;
  font-size: 13px;
  line-height: 29px;
  text-align: center;
  text-decoration: none;
  white-space: nowrap;
}
.tab--file { width: 86px; padding-right: 5px; }
.tab--on { color: #ffcb44; border-color: #ffcb44; }
.tab--s { width: 80px; }
.tab--m { width: 76px; }
.tab--l { width: 99px; }
.tab--xl { width: 125px; }
.tools { display: flex; align-items: center; margin-left: auto; padding-right: 1px; }
.search {
  display: flex;
  align-items: center;
  width: 178px;
  height: 22px;
  margin-right: 6px;
  padding-right: 2px;
  border: 1px solid #7a7a7a;
  background: #fff;
}
.search input { flex: 1; min-width: 0; padding: 0; border: 0; outline: 0; background: none; font: 11px/16px "Noto Sans", "Noto Sans CJK SC", sans-serif; }
.search input::placeholder { color: #a5a5a5; opacity: 1; }
.search svg { width: 16px; height: 16px; }
.tools .qb { width: 26px; }
.learn { gap: 4px; margin: 0 5px; font-size: 11px; }

/* Ribbon */
.ribbon { flex: none; display: flex; height: 94px; padding: 5px 0 1px; border-bottom: 1px solid #d5d5d5; }
.group { display: flex; flex-direction: column; justify-content: space-between; border-right: 1px solid #d8d8d8; }
.g-sheet { width: 79px; }
.g-view { width: 219px; }
.g-dim { width: 203px; }
.g-note { width: 268px; }
.g-table { width: 131px; }
.g-show { width: 67px; }
.cmds { display: flex; align-items: flex-start; padding-left: 8px; }
.g-view .cmds, .g-sheet .cmds, .g-show .cmds { padding-left: 11px; }
.g-table .cmds { padding-left: 5px; }
.big { flex-direction: column; width: 40px; font-size: 11px; line-height: 16px; white-space: nowrap; }
.g-view .big, .g-show .big { width: 46px; }
.big.wide { width: 58px; }
.big svg { width: 32px; height: 32px; margin-bottom: 4px; }
.big .caret { margin-top: 5px; }
.smalls { display: grid; grid-auto-rows: 32px; row-gap: 3px; margin: 0 3px; }
.g-note .smalls { margin: 0; }
.c2 { grid-template-columns: repeat(2, 33px); }
.c3 { grid-template-columns: repeat(3, 33px); }
.c6 { grid-template-columns: repeat(6, 33px); }
.sm { width: 33px; }
.sm svg { width: 24px; height: 24px; }
.lit { background: #d9ecf1; }
.tall { width: 14px; height: 32px; }
.serif-a { fill: #eb7a0e; font: bold 44px "Liberation Serif", serif; text-anchor: middle; }
.serif-b { fill: #eb7a0e; font: bold 38px "Liberation Serif", serif; text-anchor: middle; }
.tiny, .num { fill: #eb7a0e; font: bold 9px "Liberation Sans", sans-serif; text-anchor: middle; }
.num { font-size: 12px; }
.foot { display: flex; align-items: center; height: 16px; padding-right: 8px; color: #005f83; font-size: 11px; }
.foot span { flex: 1; padding-right: 3px; text-align: center; }
.foot .caret { color: #111; }
.edge { display: flex; align-items: center; margin-left: auto; padding-right: 6px; }
.ribbon .edge { align-items: flex-end; padding-bottom: 7px; }

/* Selection bar */
.filterbar { flex: none; display: flex; align-items: center; height: 28px; border-bottom: 1px solid #a5a5a5; font-size: 11px; }
.menu { gap: 7px; width: 89px; padding-left: 4px; }
.menu svg { width: 11px; height: 11px; }
.vr { width: 1px; height: 20px; background: #d5d5d5; }
.combo { display: flex; align-items: center; height: 22px; padding: 0 4px 0 2px; border: 1px solid #6e6e6e; }
.combo--a { width: 149px; margin: 0 5px 0 12px; }
.combo--b { width: 156px; margin: 0 4px 0 7px; }
.combo select { flex: 1; appearance: none; border: 0; outline: 0; background: none; padding: 0; color: inherit; font: 11px/16px "Noto Sans", "Noto Sans CJK SC", sans-serif; }
.combo .caret { border-width: 4px 4px 0; }
.fb { width: 22px; height: 22px; }
.fb svg { width: 18px; height: 18px; }
.combo--b ~ .fb { width: 25px; }
.filterbar .drop { width: 14px; }
.filterbar .drop + .vr { margin-left: 8px; }
.filterbar > .edge { margin-left: auto; }

/* Work area */
.work { flex: 1; min-height: 0; display: flex; }
.rail { flex: none; width: 37px; background: #dcdcdc; border-right: 1px solid #a0a0a0; }
.rb { width: 36px; height: 44px; }
.rail .rb--gear { height: 33px; padding-bottom: 4px; }
.rb--on { width: 34px; margin-left: 3px; padding-right: 2px; border: 1px solid #a0a0a0; border-right: 0; background: #fff; }
.rb svg { width: 24px; height: 24px; margin-left: 3px; }
.rb--on svg { margin-left: 0; }
.rb--gear svg { width: 16px; height: 16px; margin: 0; }
.panel { flex: none; display: flex; flex-direction: column; width: 306px; padding: 0 9px 6px 8px; border-right: 2px solid #b4b4b4; background: #fff; }
.panel-head { display: flex; align-items: center; height: 27px; padding: 0 1px 2px 0; margin-left: -2px; }
.panel-head svg { width: 16px; height: 16px; }
.panel-head h2 { flex: 1; margin: 0 0 0 4px; font-size: 12px; font-weight: 500; }
.panel-head button { width: 12px; height: 11px; border: 1px solid #000; border-top-width: 2px; }
.tree { flex: 1; min-height: 0; display: flex; flex-direction: column; border: 1px solid #d5d5d5; }
.rows { flex: 1; min-height: 0; overflow: hidden; }
.rows table { width: 100%; table-layout: fixed; border-collapse: separate; border-spacing: 0; }
.k1 { width: 196px; }
.k2 { width: 39px; }
.k3 { width: 24px; }
th { height: 20px; padding: 2px 0 0 6px; border: solid #e0e0e0; border-width: 0 1px 1px 0; background: #f0f0f0; font-weight: 400; text-align: left; white-space: nowrap; }
td { height: 20px; padding: 0; border: solid #e8e8e8; border-width: 0 1px 1px 0; vertical-align: top; }
th:last-child, td:last-child { border-right: 0; }
th:last-child { padding-left: 3px; }
tbody tr:nth-child(even) { background: #fafafa; }
td > svg { display: block; width: 16px; height: 16px; margin: 2px auto 0; }
td.cur > svg { margin-left: 6px; }
.up { display: inline-block; margin: 0 0 2px 18px; border: 5px solid transparent; border-top: 0; border-bottom-color: #111; }
.n { display: flex; align-items: center; height: 20px; margin-bottom: -1px; line-height: 19px; white-space: nowrap; }
.n > svg { width: 16px; height: 16px; }
.n span { padding-left: 3px; }
.n > i, .t { flex: none; width: 19px; height: 20px; }
.t svg { width: 9px; height: 9px; }
.v, .e, .t {
  --dots-v: repeating-linear-gradient(180deg, #999 0 1px, transparent 1px 2px);
  --dots-h: repeating-linear-gradient(90deg, #999 0 1px, transparent 1px 2px);
}
.v { background: var(--dots-v) 9px 0 / 1px 20px no-repeat; }
.v.h, .t { background: var(--dots-v) 9px 0 / 1px 20px no-repeat, var(--dots-h) 9px 10px / 10px 1px no-repeat; }
.e, .t.last { background: var(--dots-v) 9px 0 / 1px 10px no-repeat, var(--dots-h) 9px 10px / 10px 1px no-repeat; }
.t.first { background: var(--dots-v) 9px 10px / 1px 10px no-repeat, var(--dots-h) 9px 10px / 10px 1px no-repeat; }
.off { color: #a0a0a0; }
.now { font-weight: 700; }
.scroll { flex: none; height: 17px; padding: 7px 69px 0 17px; background: #f0f0f0; }
.scroll i { display: block; height: 2px; background: #858585; }
.splitter { flex: none; height: 6px; margin: 2px 0 1px; border: 1px solid #a8a8a8; background: #dcdcdc; }
.folds button {
  width: 100%;
  height: 24px;
  justify-content: flex-start;
  gap: 10px;
  padding: 2px 0 0 10px;
  border-bottom: 2px solid #cfcfcf;
  color: #005f83;
  font-size: 14px;
}
.folds button::before { content: ""; border: 4px solid transparent; border-left-color: #005f83; border-right: 0; }

/* Drawing area */
.stage { flex: 1; min-width: 0; display: flex; flex-direction: column; }
.docs { flex: none; height: 27px; border-bottom: 2px solid #005f87; }
.doc { display: flex; align-items: center; width: 205px; height: 25px; padding: 0 1px 0 7px; background: #005f87; }
.doc-icon { width: 12px; height: 16px; margin-right: -3px; }
.blank { flex: 1; height: 17px; border-radius: 9px; background: #fff; }
.doc button { width: 20px; height: 20px; }
.doc button svg { width: 8px; height: 8px; }
.canvas { flex: 1; min-height: 0; position: relative; background: #ccc; }
.drawing { display: block; width: 100%; height: 100%; }
.marks { font: 100 34px "Lato", "DejaVu Sans", sans-serif; text-anchor: middle; stroke: #000; stroke-width: .3; }
.sheet-name { position: absolute; left: 10px; bottom: 2px; font: 13px/18px "Liberation Sans", sans-serif; }

/* Status line */
.status {
  flex: none;
  height: 26px;
  padding-left: 3px;
  border: solid #a5a5a5;
  border-width: 1px 0 0;
  background: linear-gradient(#fff 21px, #b4c4ca 21px 22px, #d9eaef 22px);
  font-size: 11px;
  font-weight: 700;
  line-height: 20px;
}

/* Input method toolbar floating over the window */
.ime {
  position: absolute;
  right: 72px;
  bottom: 5px;
  display: flex;
  align-items: center;
  gap: 8px;
  width: 200px;
  height: 24px;
  padding-right: 5px;
  border: 1px solid #bcd0e6;
  background: #fff;
}
.ime svg { width: 16px; height: 16px; fill: #1068d8; }
.ime .ime-logo { width: 30px; height: 30px; margin-left: -3px; }
.ime-a { width: 16px; color: #1068d8; font: 20px/20px "Noto Sans", sans-serif; text-align: center; }
.watermark {
  position: absolute;
  right: 3px;
  bottom: 6px;
  color: rgba(228, 228, 228, .9);
  font: 300 38px/54px "Noto Sans", "Noto Sans CJK SC", sans-serif;
  text-shadow: 1px 1px 1px #777;
  white-space: nowrap;
}
```
